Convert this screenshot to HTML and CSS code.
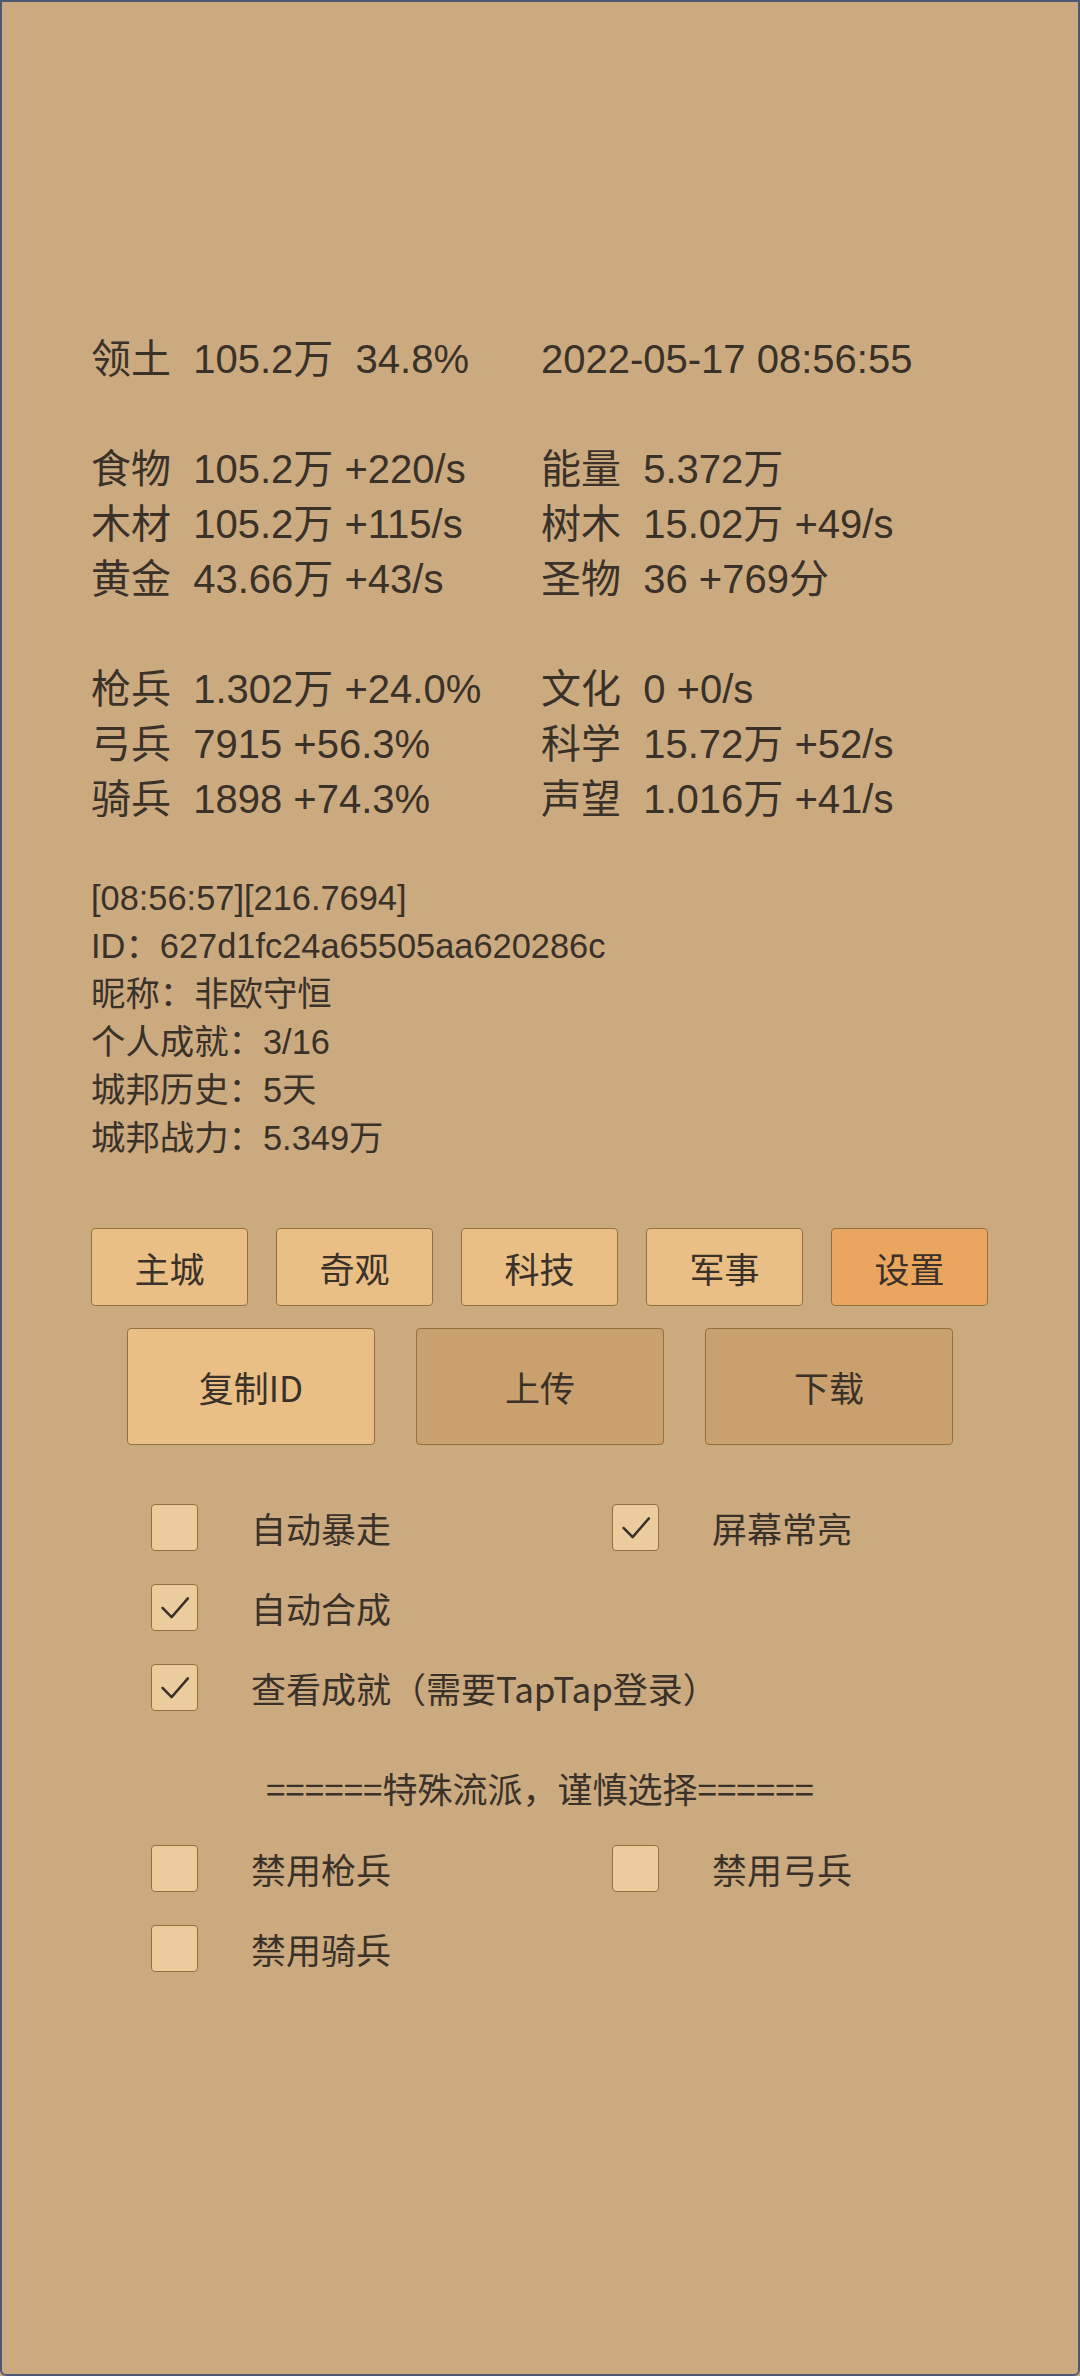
FILE: index.html
```html
<!DOCTYPE html>
<html lang="zh-CN">
<head>
<meta charset="utf-8">
<title>城邦</title>
<link rel="stylesheet" href="styles.css">
</head>
<body>
<div class="screen">
  <section class="stats">
    <div class="cell">领土  105.2万  34.8%</div>
    <div class="cell">2022-05-17 08:56:55</div>
    <div class="spacer"></div>
    <div class="cell">食物  105.2万 +220/s</div>
    <div class="cell">能量  5.372万</div>
    <div class="cell">木材  105.2万 +115/s</div>
    <div class="cell">树木  15.02万 +49/s</div>
    <div class="cell">黄金  43.66万 +43/s</div>
    <div class="cell">圣物  36 +769分</div>
    <div class="spacer"></div>
    <div class="cell">枪兵  1.302万 +24.0%</div>
    <div class="cell">文化  0 +0/s</div>
    <div class="cell">弓兵  7915 +56.3%</div>
    <div class="cell">科学  15.72万 +52/s</div>
    <div class="cell">骑兵  1898 +74.3%</div>
    <div class="cell">声望  1.016万 +41/s</div>
  </section>

  <section class="info">
    <div>[08:56:57][216.7694]</div>
    <div>ID：627d1fc24a65505aa620286c</div>
    <div>昵称：非欧守恒</div>
    <div>个人成就：3/16</div>
    <div>城邦历史：5天</div>
    <div>城邦战力：5.349万</div>
  </section>

  <nav class="tabs">
    <button class="btn tab">主城</button>
    <button class="btn tab">奇观</button>
    <button class="btn tab">科技</button>
    <button class="btn tab">军事</button>
    <button class="btn tab active">设置</button>
  </nav>

  <div class="actions">
    <button class="btn action">复制ID</button>
    <button class="btn action dark">上传</button>
    <button class="btn action dark">下载</button>
  </div>

  <section class="options">
    <label class="opt"><span class="box"></span><span class="txt">自动暴走</span></label>
    <label class="opt"><span class="box"><svg viewBox="0 0 47 47"><polyline points="11,24 20.5,33.5 37.5,14"/></svg></span><span class="txt">屏幕常亮</span></label>
    <label class="opt"><span class="box"><svg viewBox="0 0 47 47"><polyline points="11,24 20.5,33.5 37.5,14"/></svg></span><span class="txt">自动合成</span></label>
    <div class="empty"></div>
    <label class="opt wide"><span class="box"><svg viewBox="0 0 47 47"><polyline points="11,24 20.5,33.5 37.5,14"/></svg></span><span class="txt">查看成就（需要TapTap登录）</span></label>
    <div class="heading">======特殊流派，谨慎选择======</div>
    <label class="opt"><span class="box"></span><span class="txt">禁用枪兵</span></label>
    <label class="opt"><span class="box"></span><span class="txt">禁用弓兵</span></label>
    <label class="opt"><span class="box"></span><span class="txt">禁用骑兵</span></label>
  </section>
</div>
</body>
</html>
```

FILE: styles.css
```css
html, body {
  margin: 0;
  padding: 0;
  background: #cbaa80;
}

.screen {
  width: 1080px;
  height: 2376px;
  box-sizing: border-box;
  border: 2px solid #4d5875;
  border-radius: 0 0 6px 6px;
  background: #cbaa80;
  padding-top: 330px;
  color: #3a3129;
  font-family: "Liberation Sans", "Noto Sans CJK SC", sans-serif;
  overflow: hidden;
}

.stats {
  display: grid;
  grid-template-columns: 450px 1fr;
  grid-auto-rows: 55px;
  padding-left: 89px;
  font-size: 40px;
  line-height: 55px;
}

.stats .cell {
  white-space: pre;
}

.stats .spacer {
  grid-column: 1 / -1;
}

.info {
  margin-top: 47px;
  padding-left: 89px;
  font-size: 34.4px;
  line-height: 48px;
}

.btn {
  box-sizing: border-box;
  border: 1px solid #94703f;
  border-radius: 4px;
  background: #e9bf86;
  color: #3a3129;
  font-family: "Noto Sans CJK SC", "Liberation Sans", sans-serif;
  font-size: 35px;
  padding: 0;
  margin: 0;
  display: flex;
  align-items: center;
  justify-content: center;
}

.tabs {
  display: flex;
  gap: 28px;
  margin-top: 66px;
  padding-left: 89px;
}

.tab {
  width: 157px;
  height: 78px;
}

.tab.active {
  background: #eaa55e;
}

.actions {
  display: flex;
  justify-content: center;
  gap: 41px;
  margin-top: 22px;
}

.action {
  width: 248px;
  height: 117px;
}

.action.dark {
  background: #c9a06e;
}

.options {
  display: grid;
  grid-template-columns: 461px 1fr;
  grid-auto-rows: auto;
  margin-top: 42px;
  padding-left: 149px;
  font-family: "Noto Sans CJK SC", "Liberation Sans", sans-serif;
  font-size: 35px;
}

.opt {
  display: flex;
  align-items: center;
  gap: 53px;
  height: 80px;
  white-space: nowrap;
}

.opt.wide {
  grid-column: 1 / -1;
}

.empty {
  display: block;
}

.box {
  flex: none;
  box-sizing: border-box;
  width: 47px;
  height: 47px;
  border: 1px solid #94703f;
  border-radius: 4px;
  background: #ebcc9c;
  display: block;
}

.box svg {
  display: block;
  width: 45px;
  height: 45px;
  fill: none;
  stroke: #3a3129;
  stroke-width: 2.6;
  stroke-linecap: round;
  stroke-linejoin: round;
}

.txt {
  line-height: 1;
}

.heading {
  grid-column: 1 / -1;
  margin-top: 21px;
  margin-left: -149px;
  height: 80px;
  text-align: center;
  line-height: 80px;
  white-space: pre;
}
```
